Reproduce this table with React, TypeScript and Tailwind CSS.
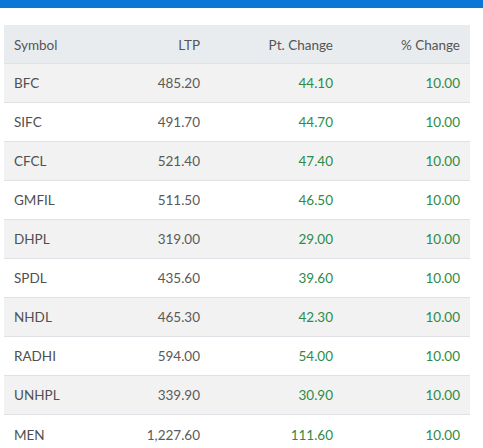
import React from "react";

const rows = [
  ["BFC", "485.20", "44.10", "10.00"],
  ["SIFC", "491.70", "44.70", "10.00"],
  ["CFCL", "521.40", "47.40", "10.00"],
  ["GMFIL", "511.50", "46.50", "10.00"],
  ["DHPL", "319.00", "29.00", "10.00"],
  ["SPDL", "435.60", "39.60", "10.00"],
  ["NHDL", "465.30", "42.30", "10.00"],
  ["RADHI", "594.00", "54.00", "10.00"],
  ["UNHPL", "339.90", "30.90", "10.00"],
  ["MEN", "1,227.60", "111.60", "10.00"],
];

export default function App() {
  return (
    <div className="w-[483px] h-[448px] overflow-hidden bg-white" style={{ fontFamily: "Lato, 'Noto Sans', sans-serif" }}>
      <div className="h-[8px] bg-[#0a76d6]" />
      <div className="pt-[17px] pl-[4px] w-[470px]">
        <table className="w-[466px] border-collapse text-[13.5px]">
          <thead>
            <tr className="bg-[#e9ecef] h-[38px] text-[#555]">
              <th className="w-[103px] text-left font-normal pl-[10px] pt-[2px]">Symbol</th>
              <th className="w-[103px] text-right font-normal pr-[10px] pt-[2px]">LTP</th>
              <th className="w-[133px] text-right font-normal pr-[10px] pt-[2px]">Pt. Change</th>
              <th className="w-[127px] text-right font-normal pr-[10px] pt-[2px]">% Change</th>
            </tr>
          </thead>
          <tbody>
            {rows.map((r, i) => (
              <tr key={r[0]} className={`h-[39px] border-t border-[#dee2e6] ${i % 2 === 0 ? "bg-[#f2f2f2]" : "bg-white"}`}>
                <td className="pl-[10px] pt-[2px] text-[#505050]">{r[0]}</td>
                <td className="pr-[10px] pt-[2px] text-right text-[#5a5a5a]">{r[1]}</td>
                <td className="pr-[10px] pt-[2px] text-right text-[#2e8b47]">{r[2]}</td>
                <td className="pr-[10px] pt-[2px] text-right text-[#2e8b47]">{r[3]}</td>
              </tr>
            ))}
          </tbody>
        </table>
      </div>
    </div>
  );
}
